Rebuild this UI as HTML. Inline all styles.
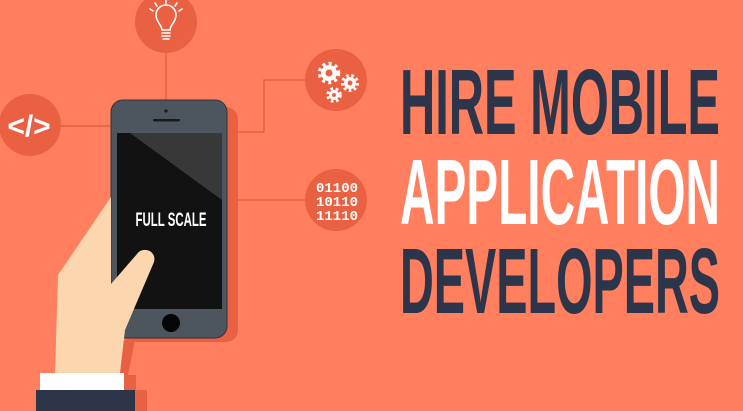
<!DOCTYPE html>
<html><head><style>
html,body{margin:0;padding:0;width:743px;height:411px;overflow:hidden;background:#ff7f5f;}
svg{display:block}
</style></head><body>
<svg width="743" height="411" viewBox="0 0 743 411" xmlns="http://www.w3.org/2000/svg">
<rect width="743" height="411" fill="#ff7f5f"/>
<g stroke="#e8603f" stroke-width="1.5" fill="none">
<line x1="166" y1="50" x2="166" y2="101"/>
<line x1="58" y1="126" x2="112" y2="126"/>
<polyline points="236,132 264,132 264,80 306,80"/>
<line x1="236" y1="200" x2="306" y2="200"/>
</g>
<g fill="#ea6043">
<circle cx="166" cy="22" r="31"/>
<circle cx="30" cy="125" r="31"/>
<circle cx="336" cy="80" r="31"/>
<circle cx="336" cy="200" r="31"/>
</g>
<g stroke="#fff" stroke-width="1.6" fill="none" stroke-linecap="round">
<path d="M162,30 C162,25 156,22 156,15 A10,10 0 1 1 176,15 C176,22 170,25 170,30 Z"/>
<line x1="162" y1="33" x2="170" y2="33"/><line x1="162" y1="36" x2="170" y2="36"/><line x1="163" y1="39" x2="169" y2="39"/>
<line x1="166" y1="0" x2="166" y2="3"/><line x1="155" y1="3" x2="157" y2="6"/><line x1="177" y1="3" x2="175" y2="6"/><line x1="150" y1="9" x2="153" y2="11"/><line x1="182" y1="9" x2="179" y2="11"/>
</g>
<text x="29" y="136" text-anchor="middle" font-family="Liberation Sans,sans-serif" font-weight="bold" font-size="30" fill="#fff">&lt;/&gt;</text>
<g fill="#fff">
<circle cx="329" cy="73" r="8"/><circle cx="350" cy="83" r="6"/><circle cx="334" cy="95" r="5"/>
<g stroke="#fff" stroke-width="3.5" stroke-dasharray="3 3.3"><circle cx="329" cy="73" r="9.5" fill="none"/></g>
<g stroke="#fff" stroke-width="3" stroke-dasharray="2.6 2.6"><circle cx="350" cy="83" r="7.5" fill="none"/><circle cx="334" cy="95" r="6.3" fill="none"/></g>
</g>
<g fill="#ea6043"><circle cx="329" cy="73" r="3.5"/><circle cx="350" cy="83" r="2.5"/><circle cx="334" cy="95" r="2"/></g>
<g font-family="Liberation Mono,monospace" font-size="14" font-weight="bold" fill="#fff" text-anchor="middle">
<text x="337" y="192" textLength="42" lengthAdjust="spacingAndGlyphs">01100</text><text x="337" y="206" textLength="42" lengthAdjust="spacingAndGlyphs">10110</text><text x="337" y="220" textLength="42" lengthAdjust="spacingAndGlyphs">11110</text>
</g>
<rect x="122" y="107" width="116" height="235" rx="12" fill="#ea6043"/>
<path d="M112,340 L135,340 L128,375 L112,375 Z" fill="#ea6043"/>
<rect x="124" y="375" width="12" height="15" fill="#ea6043"/>
<rect x="135" y="390" width="12" height="21" fill="#ea6043"/>
<rect x="111" y="100" width="116" height="238" rx="12" fill="#4d555f" stroke="#2f343b" stroke-width="1"/>
<rect x="117" y="133" width="105" height="176" fill="#121212"/>
<path d="M130,133 L222,133 L222,200 Z" fill="#383838"/>
<circle cx="166" cy="111" r="1.6" fill="#1a1a1a"/>
<rect x="153" y="119" width="27" height="2.5" rx="1.2" fill="#1a1a1a"/>
<circle cx="171" cy="323" r="9" fill="#050505"/>
<text x="171" y="226" text-anchor="middle" font-family="Liberation Sans Narrow,Liberation Sans,sans-serif" font-weight="bold" font-size="19" fill="#fff" textLength="71" lengthAdjust="spacingAndGlyphs">FULL SCALE</text>
<path d="M111,197 L111,284 L137,254 C142,246 157,250 154,262 L125,330 L120,373 L55,373 L58,275 Z" fill="#fcd6ae"/>
<rect x="40" y="373" width="84" height="17" fill="#fff"/>
<rect x="36" y="390" width="99" height="21" fill="#2d3549"/>
<g font-family="Liberation Sans Narrow,Liberation Sans,sans-serif" font-weight="bold" font-size="93">
<text x="400" y="134" fill="#2c3549" textLength="320" lengthAdjust="spacingAndGlyphs">HIRE MOBILE</text>
<text x="400" y="224" fill="#ffffff" textLength="320" lengthAdjust="spacingAndGlyphs">APPLICATION</text>
<text x="400" y="313" fill="#2c3549" textLength="320" lengthAdjust="spacingAndGlyphs">DEVELOPERS</text>
</g>
</svg>
</body></html>
